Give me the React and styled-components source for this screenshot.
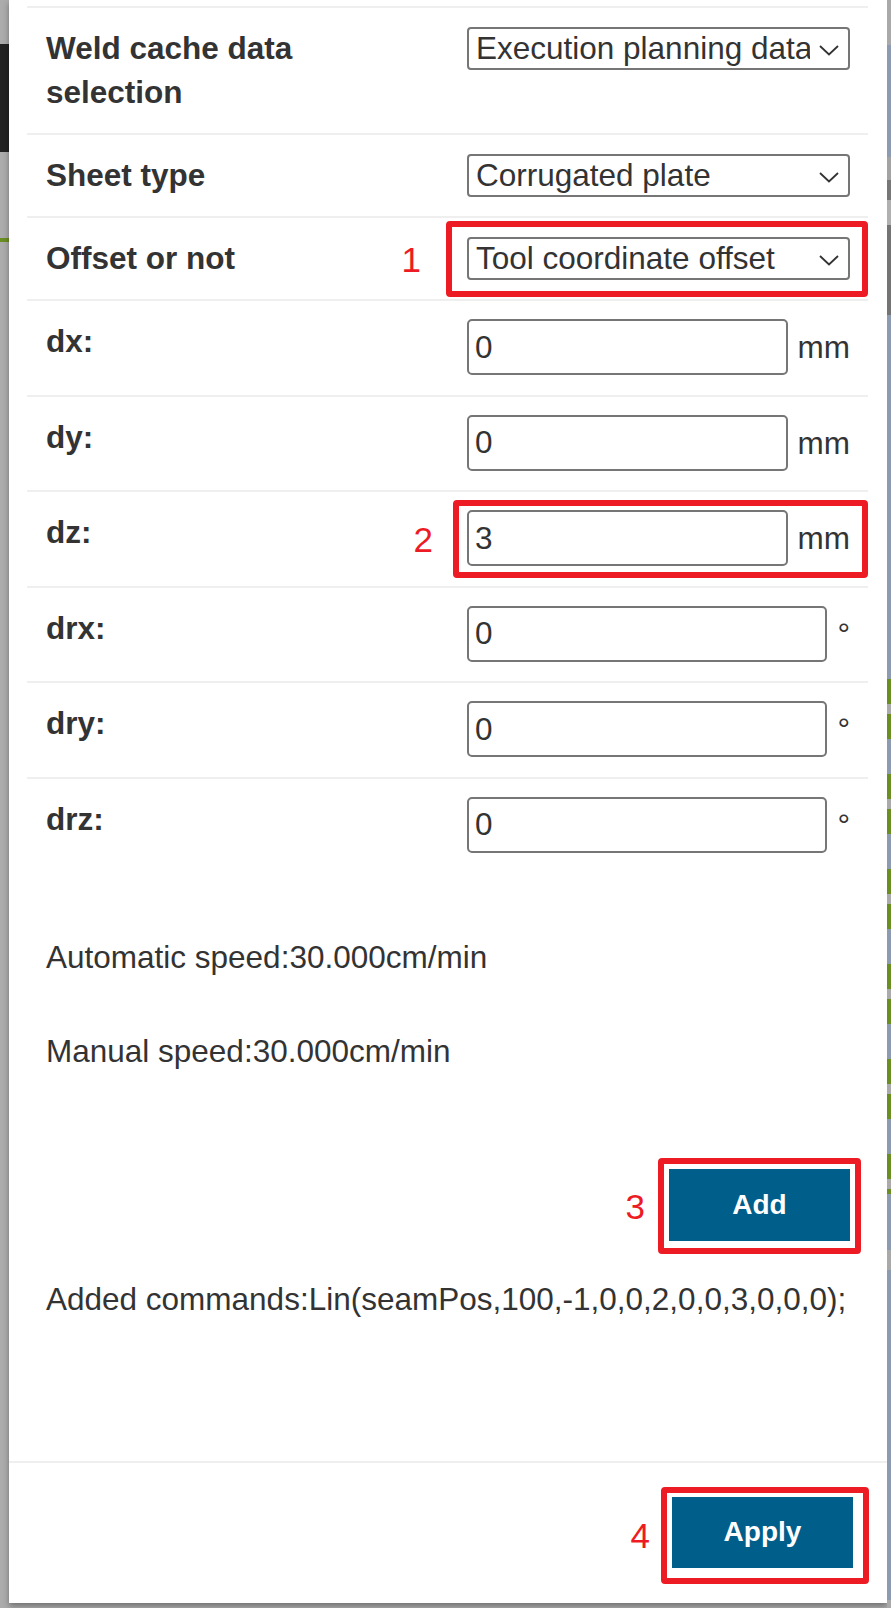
import React from 'react';
import styled, {createGlobalStyle} from 'styled-components';

const GlobalStyle = createGlobalStyle`
  html, body {
    margin: 0;
    padding: 0;
    background: #acacac;
  }
  body {
    font-family: "Liberation Sans", Arial, sans-serif;
    color: #333;
  }
`;

const Page = styled.div`
  display: flex;
  align-items: flex-start;
  width: 891px;
  height: 1608px;
  overflow: hidden;
`;

// strips of the page behind the dialog
const LeftEdge = styled.div`
  flex: none;
  align-self: stretch;
  width: 9px;
  background: linear-gradient(to bottom,
    #acacac 0 44px, #232323 44px 152px, #acacac 152px 238px,
    #6b8e23 238px 242px, #acacac 242px);
`;

const RightEdge = styled.div`
  flex: none;
  align-self: stretch;
  width: 4px;
  background:
    repeating-linear-gradient(to bottom,
      #6b8e23 0 25px, #aaaaaa 25px 35px, #6b8e23 35px 60px, #8e9ab0 60px 95px)
      0 679px / 4px 515px no-repeat,
    linear-gradient(to bottom,
      #a9a9a9 0 45px, #8e9ab0 45px 157px, #a3a3a3 157px 180px, #777 180px 200px,
      #b0b0b0 200px 225px, #747474 225px 315px, #8e9ab0 315px 1250px,
      #a9a9a9 1250px 1270px, #8e9ab0 1270px 1600px, #a9a9a9 1600px);
`;

const Panel = styled.div`
  flex: none;
  width: 878px;
  background: #fff;
  box-shadow: 0 3px 6px rgba(0, 0, 0, 0.35);
  display: flex;
  flex-direction: column;
`;

const Body = styled.div`
  padding: 6px 19px 140px 18px;
`;

const Row = styled.div`
  display: flex;
  align-items: flex-start;
  padding: 18px 18px ${p => (p.$input ? '19.6px' : '19px')} 19px;
  border-top: 2px solid #efefef;
`;

const Label = styled.div`
  flex: 1;
  min-width: 0;
  padding-right: 60px;
  font-size: 31.5px;
  font-weight: 700;
  line-height: 44px;
`;

const Control = styled.div`
  position: relative;
  flex: none;
  width: 383px;
  min-height: 44px;
  display: flex;
  align-items: center;
  gap: 10px;
`;

const Select = styled.select`
  appearance: none;
  width: 100%;
  height: 43px;
  box-sizing: border-box;
  border: 2px solid #767676;
  border-radius: 4px;
  padding: 0 38px 0 7px;
  background: #fff;
  color: #333;
  font: 31.5px "Liberation Sans", Arial, sans-serif;
`;

const Chevron = styled.svg`
  position: absolute;
  right: 11px;
  top: 50%;
  margin-top: -3px;
  pointer-events: none;
`;

const Input = styled.input`
  flex: 1;
  min-width: 0;
  height: 56px;
  box-sizing: border-box;
  border: 2px solid #767676;
  border-radius: 5px;
  padding: 0 6px;
  color: #333;
  font: 31.5px "Liberation Sans", Arial, sans-serif;
`;

const Unit = styled.span`
  flex: none;
  font-size: 31.5px;
  line-height: 56px;
`;

const Note = styled.p`
  margin: ${p => p.$top}px 0 0;
  padding-left: 19px;
  font-size: 31.5px;
  line-height: 44px;
`;

const Actions = styled.div`
  display: flex;
  justify-content: flex-end;
  margin-top: 96px;
  padding-right: 18px;
`;

const Footer = styled.div`
  display: flex;
  justify-content: flex-end;
  border-top: 2px solid #efefef;
  padding: 34px 34px 35px;
`;

const Pin = styled.div`
  position: relative;
  display: flex;
`;

const Button = styled.button`
  width: 181px;
  height: ${p => p.$h}px;
  border: none;
  background: #005e8b;
  color: #fff;
  font: 700 28px "Liberation Sans", Arial, sans-serif;
  cursor: pointer;
`;

// red annotation frames drawn over the screenshot
const Frame = styled.span`
  position: absolute;
  top: -${p => p.$t}px;
  right: -${p => p.$r}px;
  bottom: -${p => p.$b}px;
  left: -${p => p.$l}px;
  border: 6px solid #ed1c24;
  border-radius: 4px;
  pointer-events: none;
`;

const Tag = styled.span`
  position: absolute;
  right: calc(100% + ${p => p.$gap}px);
  top: 50%;
  transform: translateY(-50%);
  color: #ed1c24;
  font: 35px/1 "Liberation Sans", Arial, sans-serif;
`;

const Mark = ({n, gap, t, r, b, l}) => (
  <Frame $t={t} $r={r} $b={b} $l={l}>
    <Tag $gap={gap}>{n}</Tag>
  </Frame>
);

const Dropdown = ({value, children}) => (
  <Control>
    <Select defaultValue={value}>
      <option>{value}</option>
    </Select>
    <Chevron width="20" height="11" viewBox="0 0 20 11">
      <polyline points="1,1 10,9.5 19,1" fill="none" stroke="#333" strokeWidth="1.8" />
    </Chevron>
    {children}
  </Control>
);

const offsets = [
  {name: 'dx', value: '0', unit: 'mm'},
  {name: 'dy', value: '0', unit: 'mm'},
  {name: 'dz', value: '3', unit: 'mm', mark: true},
  {name: 'drx', value: '0', unit: '°'},
  {name: 'dry', value: '0', unit: '°'},
  {name: 'drz', value: '0', unit: '°'},
];

export default function App() {
  return (
    <Page>
      <GlobalStyle />
      <LeftEdge />
      <Panel>
        <Body>
          <Row>
            <Label>Weld cache data selection</Label>
            <Dropdown value="Execution planning data" />
          </Row>
          <Row>
            <Label>Sheet type</Label>
            <Dropdown value="Corrugated plate" />
          </Row>
          <Row>
            <Label>Offset or not</Label>
            <Dropdown value="Tool coordinate offset">
              <Mark n="1" gap={31} t={15} r={18} b={17} l={21} />
            </Dropdown>
          </Row>
          {offsets.map(o => (
            <Row $input key={o.name}>
              <Label>{o.name}:</Label>
              <Control>
                <Input defaultValue={o.value} />
                <Unit>{o.unit}</Unit>
                {o.mark && <Mark n="2" gap={26} t={10} r={18} b={12} l={14} />}
              </Control>
            </Row>
          ))}
          <Note $top={62}>Automatic speed:30.000cm/min</Note>
          <Note $top={50}>Manual speed:30.000cm/min</Note>
          <Actions>
            <Pin>
              <Button $h={72}>Add</Button>
              <Mark n="3" gap={19} t={11} r={11} b={13} l={11} />
            </Pin>
          </Actions>
          <Note $top={36}>Added commands:Lin(seamPos,100,-1,0,0,2,0,0,3,0,0,0);</Note>
        </Body>
        <Footer>
          <Pin>
            <Button $h={71}>Apply</Button>
            <Mark n="4" gap={17} t={10} r={16} b={16} l={11} />
          </Pin>
        </Footer>
      </Panel>
      <RightEdge />
    </Page>
  );
}
